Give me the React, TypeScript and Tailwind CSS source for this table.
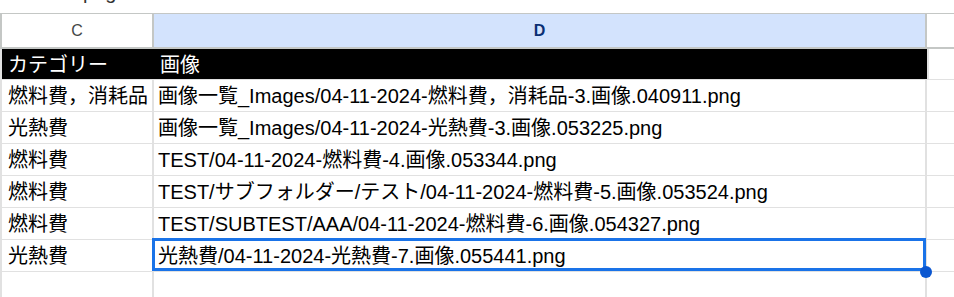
import React from "react";

const rows: [string, string][] = [
  ["燃料費，消耗品", "画像一覧_Images/04-11-2024-燃料費，消耗品-3.画像.040911.png"],
  ["光熱費", "画像一覧_Images/04-11-2024-光熱費-3.画像.053225.png"],
  ["燃料費", "TEST/04-11-2024-燃料費-4.画像.053344.png"],
  ["燃料費", "TEST/サブフォルダー/テスト/04-11-2024-燃料費-5.画像.053524.png"],
  ["燃料費", "TEST/SUBTEST/AAA/04-11-2024-燃料費-6.画像.054327.png"],
  ["光熱費", "光熱費/04-11-2024-光熱費-7.画像.055441.png"],
];

const font = {
  fontFamily: '"Liberation Sans", Arial, "Noto Sans CJK JP", sans-serif',
};

export default function App() {
  return (
    <div className="w-[954px] h-[297px] overflow-hidden bg-white text-[20px] text-black" style={font}>
      {/* clipped line above */}
      <div className="h-[13px] overflow-hidden">
        <div className="mt-[-18px] pl-[83px] leading-[20px] text-[#333]">png</div>
      </div>
      {/* column header */}
      <div className="flex h-[36px] border-t border-b-2 border-[#c4c7c5]">
        <div className="w-[154px] shrink-0 border-l-2 border-r-2 border-[#c4c7c5] bg-white flex items-center justify-center text-[16px] text-[#444746]">
          C
        </div>
        <div className="w-[773px] shrink-0 border-r-2 border-[#c4c7c5] bg-[#d3e3fd] flex items-center justify-center text-[16px] font-bold text-[#0a2f73]">
          D
        </div>
        <div className="flex-1 bg-white" />
      </div>
      {/* black header row */}
      <div className="flex h-[31px] border-b border-[#e1e1e1]">
        <div className="w-[154px] shrink-0 border-l-2 border-[#e1e1e1] bg-black text-white flex items-center pl-[6px] pt-[1px]">
          カテゴリー
        </div>
        <div className="w-[773px] shrink-0 bg-black text-white flex items-center pl-[6px] pt-[1px]">
          画像
        </div>
        <div className="flex-1 border-l-2 border-[#e1e1e1]" />
      </div>
      {rows.map(([c, d], i) => {
        const selected = i === rows.length - 1;
        return (
          <div key={i} className="flex h-[32px] border-b border-[#e1e1e1]">
            <div className="w-[154px] shrink-0 border-l-2 border-r-2 border-[#e1e1e1] flex items-center pl-[6px] whitespace-nowrap overflow-hidden">
              {c}
            </div>
            <div className="relative w-[773px] shrink-0 border-r-2 border-[#e1e1e1] flex items-center pl-[4px] whitespace-nowrap">
              {d}
              {selected && (
                <>
                  <div className="absolute left-[-2px] top-[-2px] right-[-1px] bottom-[0px] border-[3px] border-[#1a73e8]" />
                  <div className="absolute right-[-7px] bottom-[-7px] w-[12px] h-[12px] rounded-full bg-[#0b57d0]" />
                </>
              )}
            </div>
            <div className="flex-1" />
          </div>
        );
      })}
      <div className="flex h-[30px]">
        <div className="w-[154px] shrink-0 border-l-2 border-r-2 border-[#e1e1e1]" />
        <div className="w-[773px] shrink-0 border-r-2 border-[#e1e1e1]" />
        <div className="flex-1" />
      </div>
    </div>
  );
}
